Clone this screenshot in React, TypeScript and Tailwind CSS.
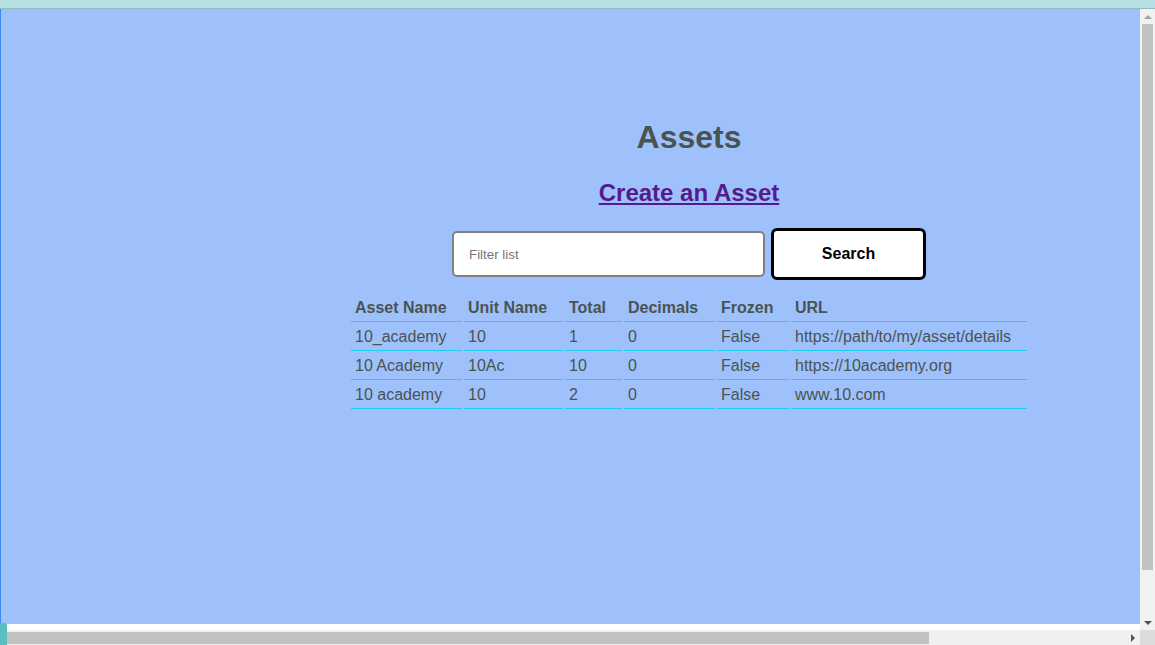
import React from 'react';

interface Asset {
  name: string;
  unit: string;
  total: number;
  decimals: number;
  frozen: string;
  url: string;
}

const assets: Asset[] = [
  { name: '10_academy', unit: '10', total: 1, decimals: 0, frozen: 'False', url: 'https://path/to/my/asset/details' },
  { name: '10 Academy', unit: '10Ac', total: 10, decimals: 0, frozen: 'False', url: 'https://10academy.org' },
  { name: '10 academy', unit: '10', total: 2, decimals: 0, frozen: 'False', url: 'www.10.com' },
];

const cell = 'pl-[4px] pr-0 py-[4px] leading-[18px] text-left border-b border-[#1fcdf3]';

const App: React.FC = () => {
  return (
    <div className="relative h-[645px] w-[1155px] flex flex-col overflow-hidden font-['Liberation_Sans',Arial,sans-serif] bg-white">
      {/* top strip */}
      <div className="h-[9px] shrink-0 bg-[#b5e0e3] border-b border-[#92bdbf]" />

      <div className="flex flex-1 min-h-0">
        <div className="flex-1 flex flex-col">
          {/* page */}
          <div className="flex-1 flex bg-[#9ec1fc] border-l border-[#3d88ee]">
            <div className="w-[237px] shrink-0" />
            <div className="flex-1 flex flex-col items-center pt-[110px] text-[#4a5350]">
              <h1 className="text-[32px] leading-[37px] font-bold">Assets</h1>
              <a href="#" className="mt-[23px] text-[24px] leading-[28px] font-bold text-[#551a8b] underline">
                Create an Asset
              </a>

              <div className="mt-[21px] flex items-center gap-[6px]">
                <input
                  type="text"
                  placeholder="Filter list"
                  className="w-[313px] h-[46px] bg-white border-2 border-[#808080] rounded-[5px] pl-[15px] text-[13.33px] text-black placeholder:text-[#757575] outline-none"
                />
                <button className="w-[155px] h-[52px] bg-white border-[3px] border-black rounded-[6px] text-[16px] font-bold text-black">
                  Search
                </button>
              </div>

              <table className="mt-[13px] table-fixed border-separate border-spacing-[2px] text-[16px] w-[680px]">
                <thead>
                  <tr>
                    <th className={`${cell} w-[111px] font-bold`}>Asset Name</th>
                    <th className={`${cell} w-[99px] font-bold`}>Unit Name</th>
                    <th className={`${cell} w-[57px] font-bold`}>Total</th>
                    <th className={`${cell} w-[91px] font-bold`}>Decimals</th>
                    <th className={`${cell} w-[72px] font-bold`}>Frozen</th>
                    <th className={`${cell} w-[236px] font-bold`}>URL</th>
                  </tr>
                </thead>
                <tbody>
                  {assets.map((a) => (
                    <tr key={a.name}>
                      <td className={cell}>{a.name}</td>
                      <td className={cell}>{a.unit}</td>
                      <td className={cell}>{a.total}</td>
                      <td className={cell}>{a.decimals}</td>
                      <td className={cell}>{a.frozen}</td>
                      <td className={`${cell} whitespace-nowrap`}>{a.url}</td>
                    </tr>
                  ))}
                </tbody>
              </table>
            </div>
          </div>
          <div className="h-[6px] bg-white" />
        </div>

        {/* vertical scrollbar */}
        <div className="w-[15px] shrink-0 bg-[#f1f1f1] flex flex-col items-center">
          <div className="h-[15px] flex items-center justify-center">
            <div className="w-0 h-0 border-l-[4px] border-r-[4px] border-b-[4px] border-l-transparent border-r-transparent border-b-[#a3a3a3]" />
          </div>
          <div className="w-[11px] h-[546px] bg-[#c1c1c1]" />
          <div className="flex-1" />
          <div className="h-[15px] flex items-center justify-center">
            <div className="w-0 h-0 border-l-[4px] border-r-[4px] border-t-[4px] border-l-transparent border-r-transparent border-t-[#505050]" />
          </div>
        </div>
      </div>

      {/* horizontal scrollbar */}
      <div className="h-[15px] shrink-0 flex">
        <div className="flex-1 bg-[#f0f0f0] flex items-center">
          <div className="ml-[7px] w-[922px] h-[12px] bg-[#c1c1c1]" />
          <div className="flex-1" />
          <div className="w-[15px] flex items-center justify-center">
            <div className="w-0 h-0 border-t-[4px] border-b-[4px] border-l-[4px] border-t-transparent border-b-transparent border-l-[#505050]" />
          </div>
        </div>
        <div className="w-[15px] bg-[#dcdcdc]" />
      </div>

      {/* corner widget */}
      <div className="absolute left-0 bottom-0 w-[7px] h-[22px] bg-[#5bbfc2] rounded-tr-[2px]" />
    </div>
  );
};

export default App;
